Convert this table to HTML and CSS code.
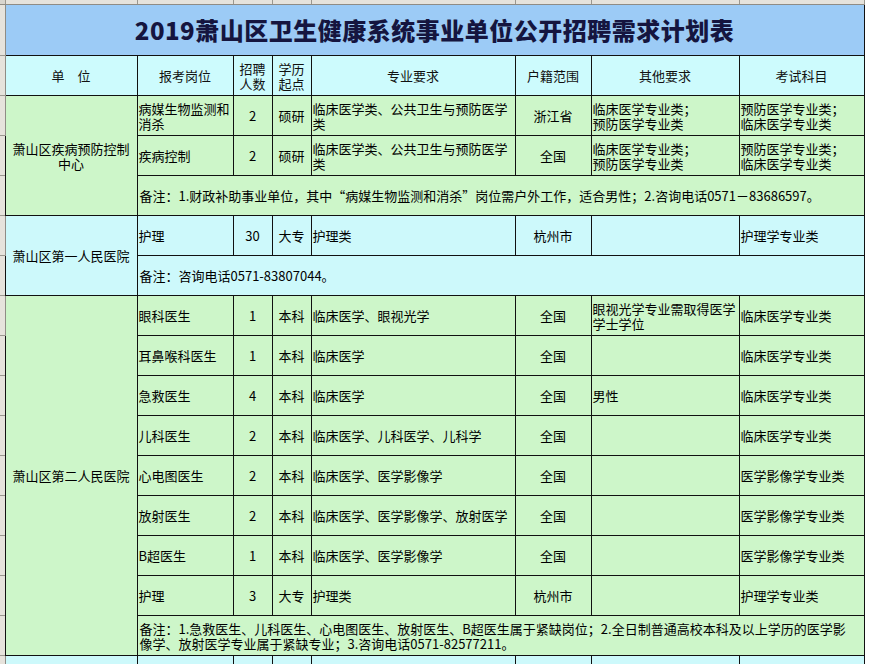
FILE: index.html
```html
<!DOCTYPE html>
<html lang="zh-CN">
<head>
<meta charset="utf-8">
<title>2019萧山区卫生健康系统事业单位公开招聘需求计划表</title>
<link rel="stylesheet" href="styles.css">
</head>
<body>
<div class="sheet">
<table class="grid">
  <colgroup>
    <col class="c-rh"><col class="c-unit"><col class="c-post"><col class="c-num"><col class="c-edu"><col class="c-major"><col class="c-reg"><col class="c-other"><col class="c-exam">
  </colgroup>
  <tr class="colhead">
    <th class="corner"></th><th></th><th></th><th></th><th></th><th></th><th></th><th></th><th></th>
  </tr>
  <tr class="r-title">
    <th class="rh"></th>
    <td colspan="8" class="title">2019萧山区卫生健康系统事业单位公开招聘需求计划表</td>
  </tr>
  <tr class="r-head">
    <th class="rh"></th>
    <td class="hd">单　位</td>
    <td class="hd">报考岗位</td>
    <td class="hd">招聘<br>人数</td>
    <td class="hd">学历<br>起点</td>
    <td class="hd">专业要求</td>
    <td class="hd">户籍范围</td>
    <td class="hd">其他要求</td>
    <td class="hd">考试科目</td>
  </tr>

  <tr class="green">
    <th class="rh"></th>
    <td class="unit" rowspan="3">萧山区疾病预防控制<br>中心</td>
    <td class="l">病媒生物监测和消杀</td>
    <td class="c">2</td>
    <td class="c">硕研</td>
    <td class="l">临床医学类、公共卫生与预防医学类</td>
    <td class="c">浙江省</td>
    <td class="l">临床医学专业类；<br>预防医学专业类</td>
    <td class="l">预防医学专业类；<br>临床医学专业类</td>
  </tr>
  <tr class="green">
    <th class="rh"></th>
    <td class="l">疾病控制</td>
    <td class="c">2</td>
    <td class="c">硕研</td>
    <td class="l">临床医学类、公共卫生与预防医学类</td>
    <td class="c">全国</td>
    <td class="l">临床医学专业类；<br>预防医学专业类</td>
    <td class="l">预防医学专业类；<br>临床医学专业类</td>
  </tr>
  <tr class="green">
    <th class="rh"></th>
    <td class="note" colspan="7">备注：1.财政补助事业单位，其中“病媒生物监测和消杀”岗位需户外工作，适合男性；2.咨询电话0571－83686597。</td>
  </tr>

  <tr class="cyan">
    <th class="rh"></th>
    <td class="unit" rowspan="2">萧山区第一人民医院</td>
    <td class="l">护理</td>
    <td class="c">30</td>
    <td class="c">大专</td>
    <td class="l">护理类</td>
    <td class="c">杭州市</td>
    <td class="l"></td>
    <td class="l">护理学专业类</td>
  </tr>
  <tr class="cyan">
    <th class="rh"></th>
    <td class="note" colspan="7">备注：咨询电话0571-83807044。</td>
  </tr>

  <tr class="green">
    <th class="rh"></th>
    <td class="unit" rowspan="9">萧山区第二人民医院</td>
    <td class="l">眼科医生</td>
    <td class="c">1</td>
    <td class="c">本科</td>
    <td class="l">临床医学、眼视光学</td>
    <td class="c">全国</td>
    <td class="l">眼视光学专业需取得医学<br>学士学位</td>
    <td class="l">临床医学专业类</td>
  </tr>
  <tr class="green">
    <th class="rh"></th>
    <td class="l">耳鼻喉科医生</td>
    <td class="c">1</td>
    <td class="c">本科</td>
    <td class="l">临床医学</td>
    <td class="c">全国</td>
    <td class="l"></td>
    <td class="l">临床医学专业类</td>
  </tr>
  <tr class="green">
    <th class="rh"></th>
    <td class="l">急救医生</td>
    <td class="c">4</td>
    <td class="c">本科</td>
    <td class="l">临床医学</td>
    <td class="c">全国</td>
    <td class="l">男性</td>
    <td class="l">临床医学专业类</td>
  </tr>
  <tr class="green">
    <th class="rh"></th>
    <td class="l">儿科医生</td>
    <td class="c">2</td>
    <td class="c">本科</td>
    <td class="l">临床医学、儿科医学、儿科学</td>
    <td class="c">全国</td>
    <td class="l"></td>
    <td class="l">临床医学专业类</td>
  </tr>
  <tr class="green">
    <th class="rh"></th>
    <td class="l">心电图医生</td>
    <td class="c">2</td>
    <td class="c">本科</td>
    <td class="l">临床医学、医学影像学</td>
    <td class="c">全国</td>
    <td class="l"></td>
    <td class="l">医学影像学专业类</td>
  </tr>
  <tr class="green">
    <th class="rh"></th>
    <td class="l">放射医生</td>
    <td class="c">2</td>
    <td class="c">本科</td>
    <td class="l">临床医学、医学影像学、放射医学</td>
    <td class="c">全国</td>
    <td class="l"></td>
    <td class="l">医学影像学专业类</td>
  </tr>
  <tr class="green">
    <th class="rh"></th>
    <td class="l">B超医生</td>
    <td class="c">1</td>
    <td class="c">本科</td>
    <td class="l">临床医学、医学影像学</td>
    <td class="c">全国</td>
    <td class="l"></td>
    <td class="l">医学影像学专业类</td>
  </tr>
  <tr class="green">
    <th class="rh"></th>
    <td class="l">护理</td>
    <td class="c">3</td>
    <td class="c">大专</td>
    <td class="l">护理类</td>
    <td class="c">杭州市</td>
    <td class="l"></td>
    <td class="l">护理学专业类</td>
  </tr>
  <tr class="green">
    <th class="rh"></th>
    <td class="note" colspan="7">备注：1.急救医生、儿科医生、心电图医生、放射医生、B超医生属于紧缺岗位；2.全日制普通高校本科及以上学历的医学影<br>像学、放射医学专业属于紧缺专业；3.咨询电话0571-82577211。</td>
  </tr>

  <tr class="cyan">
    <th class="rh"></th>
    <td class="unit"></td>
    <td class="l"></td>
    <td class="c"></td>
    <td class="c"></td>
    <td class="l"></td>
    <td class="c"></td>
    <td class="l"></td>
    <td class="l"></td>
  </tr>
</table>
</div>
</body>
</html>
```

FILE: styles.css
```css
html, body {
  margin: 0;
  padding: 0;
  background: #ffffff;
}

.sheet {
  width: 872px;
  height: 664px;
  overflow: hidden;
  background: #ffffff;
}

.grid {
  border-collapse: collapse;
  table-layout: fixed;
  width: 864px;
  font-family: "Noto Sans CJK SC", "Noto Sans", sans-serif;
  font-size: 13px;
  line-height: 15px;
  color: #000000;
}

.c-rh { width: 5px; }
.c-unit { width: 132px; }
.c-post { width: 96px; }
.c-num { width: 39px; }
.c-edu { width: 39px; }
.c-major { width: 204px; }
.c-reg { width: 76px; }
.c-other { width: 148px; }
.c-exam { width: 125px; }

.grid td {
  border: 1px solid #111111;
  padding: 0 1px;
  vertical-align: middle;
  height: 39px;
  overflow: hidden;
  white-space: normal;
}

.colhead th {
  height: 4px;
  padding: 0;
  background: #e6e3dc;
  border-right: 1px solid #9a978f;
  border-bottom: 1px solid #8f8c85;
}

.colhead th.corner {
  background: #d8d5ce;
}

.rh {
  padding: 0;
  background: #e6e3dc;
  border-bottom: 1px solid #9a978f;
  border-right: 1px solid #8f8c85;
}

.r-title td.title {
  height: 50px;
  background: #9ccbf6;
  text-align: center;
  font-size: 24px;
  line-height: 30px;
  font-weight: 900;
  color: #15153f;
  letter-spacing: 0.5px;
}

.r-head td.hd {
  background: #cdfbfd;
  text-align: center;
  color: #111111;
}

.green td { background: #cdf6c9; }
.cyan td { background: #cdf9fb; }

.grid td.unit { text-align: center; }
.grid td.l { text-align: left; }
.grid td.c { text-align: center; }
.grid td.note {
  text-align: left;
  padding-left: 2px;
}
```
